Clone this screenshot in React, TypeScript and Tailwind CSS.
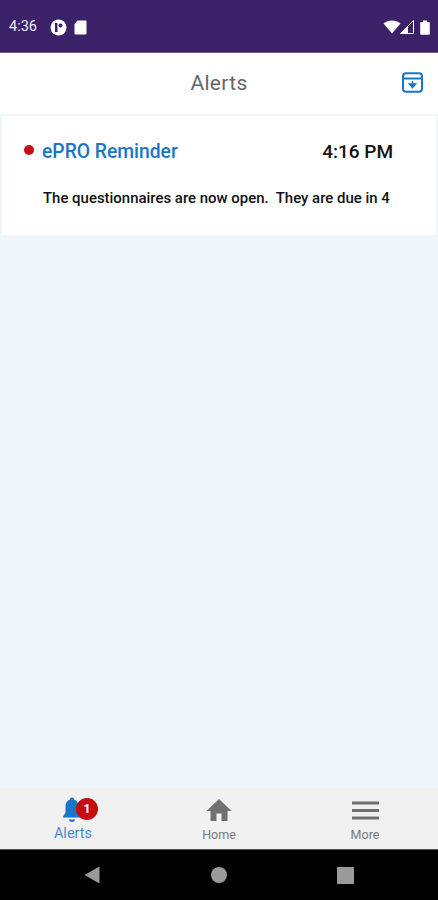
// Status bar, header, one alert card, tab bar and Android nav bar
function StatusBar() {
  return (
    <div className="h-[53px] shrink-0 bg-[#3b2268] border-b border-[#6f5a94] pl-[9px] pr-[8px] flex items-center justify-between text-white">
      <div className="flex items-center mt-[2px]">
        <span className="text-[14.5px] leading-none w-[40px] text-[#eeeaf4] mt-[1px]">4:36</span>
        <svg width="17" height="17" viewBox="0 0 17 17" className="ml-[1px]">
          <circle cx="8.5" cy="8.5" r="8" fill="#fff" />
          <rect x="5" y="4" width="2.5" height="9" fill="#3b2268" />
          <circle cx="10.5" cy="6.5" r="2" fill="#3b2268" />
        </svg>
        <svg width="13" height="15" viewBox="0 0 13 15" className="ml-[7px]">
          <path d="M3.5 0.5H11.5a1 1 0 0 1 1 1V13.5a1 1 0 0 1-1 1H1.5a1 1 0 0 1-1-1V4z" fill="#fff" />
        </svg>
      </div>
      <div className="flex items-center mt-[2px]">
        <svg width="18" height="14" viewBox="0 0 18 14">
          <path d="M0.5 3.5C5 -0.6 13 -0.6 17.5 3.5L9 13.5z" fill="#fff" />
        </svg>
        <svg width="14" height="14" viewBox="0 0 14 14" className="ml-[-1px]">
          <path d="M13.5 0.5V13.5H0.5z" fill="none" stroke="#fff" strokeWidth="1" />
          <path d="M8 6.5V13.5H0.5z" fill="#fff" />
        </svg>
        <svg width="10" height="15" viewBox="0 0 10 15" className="ml-[6px]">
          <path d="M3 0.5H7V2H9a0.8 0.8 0 0 1 0.8 0.8V14a0.8 0.8 0 0 1-0.8 0.8H1a0.8 0.8 0 0 1-0.8-0.8V2.8A0.8 0.8 0 0 1 1 2H3z" fill="#fff" />
        </svg>
      </div>
    </div>
  )
}

function Header() {
  return (
    <div className="h-[61px] shrink-0 bg-white flex items-center justify-center relative">
      <h1 className="text-[21px] font-normal text-[#63676d] tracking-[0.3px]">Alerts</h1>
      <svg width="21" height="21" viewBox="0 0 21 21" fill="none" className="absolute right-[15px] top-[19px]">
        <rect x="1" y="1.2" width="19" height="18.6" rx="3" stroke="#1a76c4" strokeWidth="2" />
        <path d="M1 6.5H20" stroke="#1a76c4" strokeWidth="2" />
        <path d="M10.5 9V13M7.5 12L10.5 15.5L13.5 12z" stroke="#1a76c4" strokeWidth="1.6" fill="#1a76c4" />
      </svg>
    </div>
  )
}

function AlertCard() {
  return (
    <div className="mx-[2px] h-[119px] bg-white pt-[22px]">
      <div className="flex items-center pl-[22px] pr-[43px] justify-between">
        <div className="flex items-center">
          <span className="w-[10px] h-[10px] rounded-full bg-[#c40d12] mb-[3px]" />
          <span className="ml-[8px] text-[19.3px] font-medium text-[#1a76c4] leading-[26px] mt-[1px]">ePRO Reminder</span>
        </div>
        <span className="text-[19px] font-medium text-[#111] leading-[26px]">4:16 PM</span>
      </div>
      <p className="mt-[23px] ml-[41px] text-[14.95px] font-medium text-[#111] leading-[20px] whitespace-pre">
        The questionnaires are now open.  They are due in 4
      </p>
    </div>
  )
}

function TabBar() {
  return (
    <div className="h-[61px] shrink-0 bg-[#f1f1f2] grid grid-cols-3 items-start">
      <div className="flex flex-col items-center pt-[9px] relative">
        {/* bell with a small clapper, the badge sits over its right side */}
        <svg width="20" height="26" viewBox="0 0 20 26" className="mr-[3px]">
          <path d="M10 0.5C11.2 0.5 12 1.4 12 2.6C15.2 3.6 16.5 6.4 16.5 9.5V15.5L19.5 20.5H0.5L3.5 15.5V9.5C3.5 6.4 4.8 3.6 8 2.6C8 1.4 8.8 0.5 10 0.5z" fill="#1a76c4" />
          <path d="M7 22.5H13C13 24 11.7 25 10 25S7 24 7 22.5z" fill="#1a76c4" />
        </svg>
        <span className="absolute left-[76px] top-[10px] w-[22px] h-[22px] rounded-full bg-[#c40d12] text-white text-[13px] font-bold flex items-center justify-center">1</span>
        <span className="text-[14.5px] leading-[16px] text-[#4a8cc8] mt-[3px]">Alerts</span>
      </div>
      <div className="flex flex-col items-center pt-[10px]">
        <svg width="26" height="24" viewBox="0 0 26 24">
          <path d="M13 1L25.5 13H21.5V23H15.5V15.5H10.5V23H4.5V13H0.5z" fill="#707070" />
        </svg>
        <span className="text-[12.5px] leading-[16px] text-[#7a7a7a] mt-[5px]">Home</span>
      </div>
      <div className="flex flex-col items-center pt-[13px]">
        <svg width="27" height="20" viewBox="0 0 27 20" className="mb-[5px]">
          <rect y="0.5" width="27" height="3" fill="#707070" />
          <rect y="8" width="27" height="3" fill="#707070" />
          <rect y="15.5" width="27" height="3" fill="#707070" />
        </svg>
        <span className="text-[12.5px] leading-[16px] text-[#7a7a7a] mt-[1px]">More</span>
      </div>
    </div>
  )
}

function NavBar() {
  return (
    <div className="h-[51px] shrink-0 bg-black border-t border-[#555] flex items-center justify-between pl-[84px] pr-[84px]">
      <svg width="16" height="18" viewBox="0 0 16 18">
        <path d="M15.5 0.5V17.5L0.5 9z" fill="#9a9a9a" />
      </svg>
      <span className="w-[16px] h-[16px] rounded-full bg-[#9a9a9a]" />
      <span className="w-[17px] h-[17px] rounded-[1px] bg-[#9a9a9a]" />
    </div>
  )
}

export default function App() {
  return (
    <div className="w-[438px] h-[900px] flex flex-col bg-[#f0f7fb] font-['Roboto',sans-serif] overflow-hidden">
      <StatusBar />
      <Header />
      <div className="flex-1 pt-[2px]">
        <AlertCard />
      </div>
      <TabBar />
      <NavBar />
    </div>
  )
}
